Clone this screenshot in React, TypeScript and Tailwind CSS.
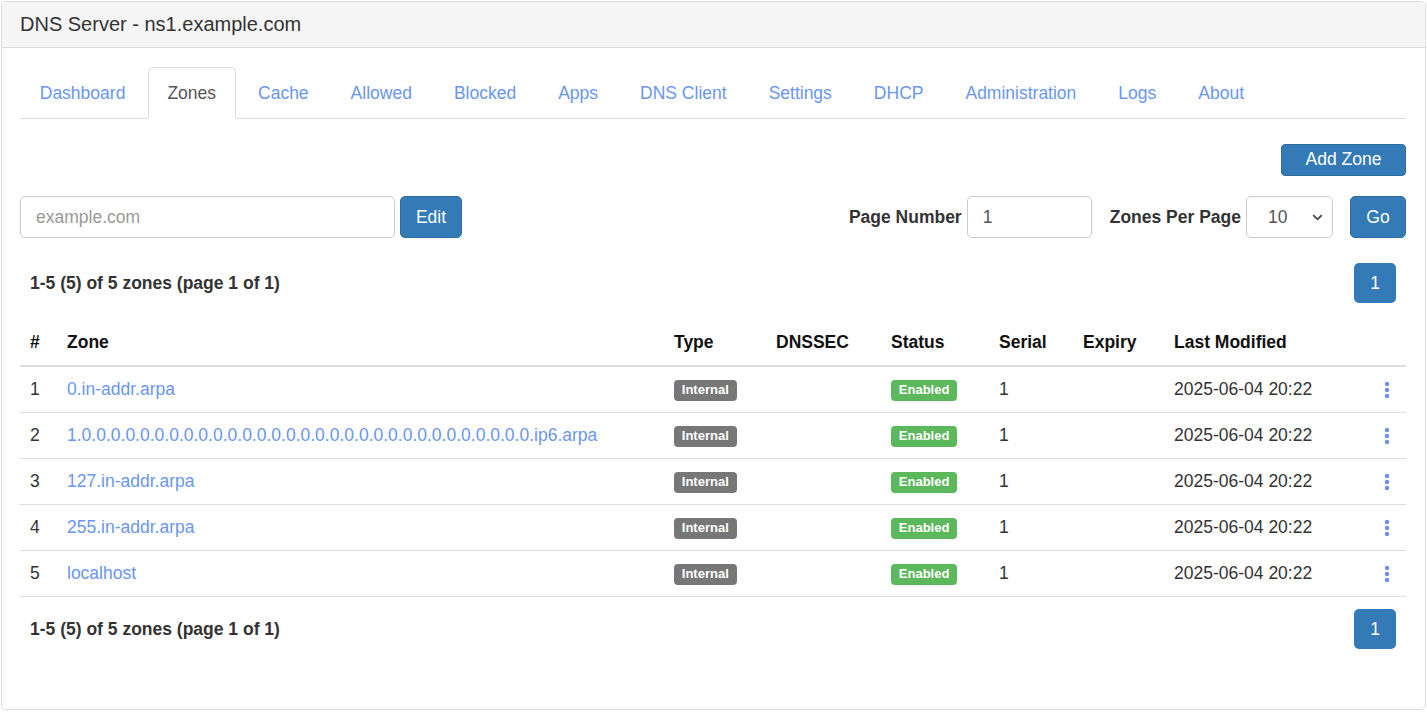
import React from "react";

const tabs = ["Dashboard", "Zones", "Cache", "Allowed", "Blocked", "Apps", "DNS Client", "Settings", "DHCP", "Administration", "Logs", "About"];

const zones = [
  "0.in-addr.arpa",
  "1.0.0.0.0.0.0.0.0.0.0.0.0.0.0.0.0.0.0.0.0.0.0.0.0.0.0.0.0.0.0.0.ip6.arpa",
  "127.in-addr.arpa",
  "255.in-addr.arpa",
  "localhost",
];

function Kebab() {
  return (
    <svg width="6" height="18" viewBox="0 0 6 18" className="block">
      <circle cx="3" cy="3" r="2.2" fill="#6b8ff5" />
      <circle cx="3" cy="9" r="2.2" fill="#6b8ff5" />
      <circle cx="3" cy="15" r="2.2" fill="#6b8ff5" />
    </svg>
  );
}

function Info() {
  return (
    <div className="flex items-center justify-between">
      <div className="pl-[10px] font-bold text-[#333]">1-5 (5) of 5 zones (page 1 of 1)</div>
      <div className="mr-[10px] flex h-[40px] w-[42px] items-center justify-center rounded-[5px] bg-[#337ab7] text-white">1</div>
    </div>
  );
}

function Badge({ text, color }: { text: string; color: string }) {
  return (
    <span className={`inline-block rounded-[4px] px-[7.8px] pb-[3px] pt-[2px] text-[13px] font-bold leading-[16px] text-white ${color}`}>{text}</span>
  );
}

export default function App() {
  return (
    <div className="m-[1px] text-[17.5px] leading-[25px] text-[#333]" style={{ fontFamily: '"Liberation Sans", Arial, sans-serif' }}>
      <div className="h-[709px] rounded-[5px] border border-[#ddd] bg-white">
        <div className="flex h-[46px] items-center rounded-t-[5px] border-b border-[#ddd] bg-[#f5f5f5] px-[18px] text-[20px]">
          DNS Server - ns1.example.com
        </div>
        <div className="pl-[18px] pr-[19px] pt-[19px]">
          <ul className="flex border-b border-[#ddd]">
            {tabs.map((t) => (
              <li key={t} className="mr-[2.5px] -mb-px">
                {t === "Zones" ? (
                  <span className="block rounded-t-[5px] border border-[#ddd] border-b-white bg-white px-[18.75px] py-[12.5px] text-[#555]">{t}</span>
                ) : (
                  <span className="block border border-transparent px-[18.75px] py-[12.5px] text-[#6a96f0]">{t}</span>
                )}
              </li>
            ))}
          </ul>

          <div className="mt-[25px] flex justify-end">
            <button className="h-[32px] w-[125px] rounded-[4px] border border-[#2e6da4] bg-[#337ab7] pb-[1px] text-white">Add Zone</button>
          </div>

          <div className="mt-[20px] flex items-center">
            <input
              className="h-[42px] w-[375px] rounded-[5px] border border-[#ccc] px-[15px] text-[#555] outline-none placeholder:text-[#999]"
              placeholder="example.com"
            />
            <button className="ml-[5px] h-[42px] w-[62px] rounded-[5px] border border-[#2e6da4] bg-[#337ab7] text-white">Edit</button>
            <div className="flex-1" />
            <span className="font-bold">Page Number</span>
            <input className="ml-[5px] h-[42px] w-[125px] rounded-[5px] border border-[#ccc] px-[15px] text-[#555] outline-none" defaultValue="1" />
            <span className="ml-[18px] font-bold">Zones Per Page</span>
            <div className="relative ml-[5px] h-[42px] w-[87px]">
              <select className="h-full w-full appearance-none rounded-[5px] border border-[#ccc] bg-white px-[21px] text-[#555] outline-none" defaultValue="10">
                <option>10</option>
                <option>25</option>
                <option>50</option>
                <option>100</option>
              </select>
              <svg className="pointer-events-none absolute right-[10px] top-[18px]" width="11" height="7" viewBox="0 0 11 7">
                <path d="M1.2 1.2 L5.5 5.3 L9.8 1.2" fill="none" stroke="#444" strokeWidth="1.8" />
              </svg>
            </div>
            <button className="ml-[17px] h-[42px] w-[56px] rounded-[5px] border border-[#2e6da4] bg-[#337ab7] text-white">Go</button>
          </div>

          <div className="mt-[25px]">
            <Info />
          </div>

          <table className="mt-[17px] w-[1386px] table-fixed border-collapse">
            <colgroup>
              <col className="w-[37px]" />
              <col className="w-[607px]" />
              <col className="w-[102px]" />
              <col className="w-[115px]" />
              <col className="w-[108px]" />
              <col className="w-[84px]" />
              <col className="w-[91px]" />
              <col className="w-[200px]" />
              <col className="w-[42px]" />
            </colgroup>
            <thead>
              <tr className="border-b-2 border-[#ddd] text-left text-[#111]">
                {["#", "Zone", "Type", "DNSSEC", "Status", "Serial", "Expiry", "Last Modified", ""].map((h, i) => (
                  <th key={i} className="p-[10px] font-bold">{h}</th>
                ))}
              </tr>
            </thead>
            <tbody>
              {zones.map((z, i) => (
                <tr key={z} className="border-b border-[#ddd]">
                  <td className="p-[10px]">{i + 1}</td>
                  <td className="whitespace-nowrap p-[10px] text-[#6a96f0]">{z}</td>
                  <td className="p-[10px]">
                    <div className="flex h-[25px] items-center pt-[1px]">
                      <Badge text="Internal" color="bg-[#777]" />
                    </div>
                  </td>
                  <td className="p-[10px]"></td>
                  <td className="p-[10px]">
                    <div className="flex h-[25px] items-center pt-[1px]">
                      <Badge text="Enabled" color="bg-[#5cb85c]" />
                    </div>
                  </td>
                  <td className="p-[10px]">1</td>
                  <td className="p-[10px]"></td>
                  <td className="whitespace-nowrap p-[10px]">2025-06-04 20:22</td>
                  <td className="p-[10px]">
                    <div className="flex h-[25px] items-center justify-center pl-[4px]">
                      <Kebab />
                    </div>
                  </td>
                </tr>
              ))}
            </tbody>
          </table>

          <div className="mt-[12px]">
            <Info />
          </div>
        </div>
      </div>
    </div>
  );
}
